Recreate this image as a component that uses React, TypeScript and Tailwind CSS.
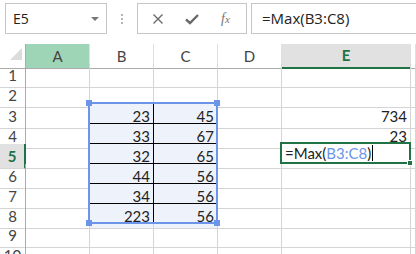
import React from "react";

const cols = ["A", "B", "C", "D", "E", ""];
const data: Record<number, string[]> = {
  3: ["", "23", "45", "", "734"],
  4: ["", "33", "67", "", "23"],
  5: ["", "32", "65", "", ""],
  6: ["", "44", "56", "", ""],
  7: ["", "34", "56", "", ""],
  8: ["", "223", "56", "", ""],
};

const gridCols = "grid grid-cols-[26px_64px_64px_64px_64px_129px_1fr]";

function cellClass(r: number, c: number) {
  const inRange = r >= 3 && r <= 8 && (c === 1 || c === 2);
  return inRange
    ? "flex items-center justify-end border-r border-b border-[#d4d4d4] bg-[#eef2fb] pr-[3px] pt-[1px]"
    : "flex items-center justify-end border-r border-b border-[#d4d4d4] pr-[3px] pt-[1px]";
}

export default function App() {
  const rows = [1, 2, 3, 4, 5, 6, 7, 8, 9, 10];
  return (
    <div className="w-[416px] h-[254px] overflow-hidden bg-white font-['Lato',sans-serif] text-[15px] text-[#222]">
      {/* formula bar */}
      <div className="flex h-[44px] items-start pt-[3px] font-['Open_Sans',sans-serif]">
        <div className="ml-[5px] flex h-[31px] w-[102px] items-center justify-between border border-[#c6c6c6] pl-[7px] pr-[7px] text-[14px]">
          <span>E5</span>
          <span className="h-0 w-0 border-x-[4px] border-t-[4px] border-x-transparent border-t-[#777]" />
        </div>
        <div className="flex h-[31px] w-[30px] flex-col items-center justify-center gap-[2px]">
          <span className="h-[2px] w-[2px] bg-[#b5b5b5]" />
          <span className="h-[2px] w-[2px] bg-[#b5b5b5]" />
          <span className="h-[2px] w-[2px] bg-[#b5b5b5]" />
        </div>
        <div className="flex h-[31px] w-[110px] items-center border border-[#c6c6c6]">
          <svg className="ml-[14px]" width="12" height="12" viewBox="0 0 12 12">
            <path d="M1.5 1.5L10.5 10.5M10.5 1.5L1.5 10.5" stroke="#6a6a6a" strokeWidth="1.4" />
          </svg>
          <svg className="ml-[21px]" width="14" height="12" viewBox="0 0 14 12">
            <path d="M1 6.5L5 10L13 2" stroke="#6a6a6a" strokeWidth="2.4" fill="none" />
          </svg>
          <span className="ml-[22px] font-['Liberation_Serif',serif] text-[14px] italic text-[#777]">
            f<span className="text-[11px]">x</span>
          </span>
        </div>
        <div className="ml-[4px] flex h-[31px] flex-1 items-center border-y border-l border-[#c6c6c6] pl-[10px] text-[15px] text-[#222]">
          =Max(B3:C8)
        </div>
      </div>

      {/* sheet */}
      <div className="relative">
        <div className={`${gridCols} h-[20px] text-[#444]`}>
          <div className="relative border-r border-b border-[#ababab]">
            <svg className="absolute left-[10px] top-[4px]" width="12" height="12" viewBox="0 0 12 12">
              <path d="M12 0V12H0Z" fill="#dcdcdc" />
            </svg>
          </div>
          {cols.map((c, i) => (
            <div
              key={i}
              className={
                c === "A"
                  ? "flex items-center justify-center border-r border-b border-r-[#e0e0e0] border-b-[#ababab] bg-[#9fd5b7]"
                  : c === "E"
                  ? "flex items-center justify-center border-r border-b-2 border-r-[#e0e0e0] border-b-[#217346] bg-[#e1e1e1] font-bold text-[#217346]"
                  : "flex items-center justify-center border-r border-b border-r-[#e0e0e0] border-b-[#ababab]"
              }
            >
              {c}
            </div>
          ))}
        </div>
        {rows.map((r) => (
          <div key={r} className={`${gridCols} h-[20px]`}>
            <div
              className={
                r === 5
                  ? "flex items-center justify-center border-r-2 border-b border-r-[#217346] border-b-[#d4d4d4] bg-[#e1e1e1] font-bold text-[#217346]"
                  : "flex items-center justify-center border-r border-b border-r-[#ababab] border-b-[#d4d4d4] text-[#444]"
              }
            >
              {r}
            </div>
            {cols.map((_, c) => (
              <div key={c} className={cellClass(r, c)}>
                {data[r]?.[c] ?? ""}
              </div>
            ))}
          </div>
        ))}

        {/* formula reference range B3:C8 with its cell borders */}
        <div className="absolute left-[88px] top-[58px] h-[122px] w-[130px] border-2 border-[#6c94e8]">
          <div className="flex h-full flex-col">
            {[0, 1, 2, 3, 4].map((i) => (
              <div key={i} className="h-[20px] shrink-0 border-b border-black" />
            ))}
          </div>
          <div className="absolute bottom-0 left-[63px] top-0 w-px bg-black" />
          <span className="absolute -left-[4px] -top-[4px] h-[6px] w-[6px] bg-[#6c94e8]" />
          <span className="absolute -right-[4px] -top-[4px] h-[6px] w-[6px] bg-[#6c94e8]" />
          <span className="absolute -left-[4px] -bottom-[4px] h-[6px] w-[6px] bg-[#6c94e8]" />
          <span className="absolute -right-[4px] -bottom-[4px] h-[6px] w-[6px] bg-[#6c94e8]" />
        </div>

        {/* active cell E5 */}
        <div className="absolute left-[280px] top-[98px] flex h-[22px] w-[131px] items-center border-2 border-[#217346] bg-white pl-[3px]">
          <span>=Max(</span>
          <span className="text-[#6c94e8]">B3:C8</span>
          <span>)</span>
          <span className="ml-[1px] h-[16px] w-[1px] bg-black" />
          <span className="absolute -bottom-[4px] -right-[4px] h-[6px] w-[6px] border border-white bg-[#217346]" />
        </div>
      </div>
    </div>
  );
}
